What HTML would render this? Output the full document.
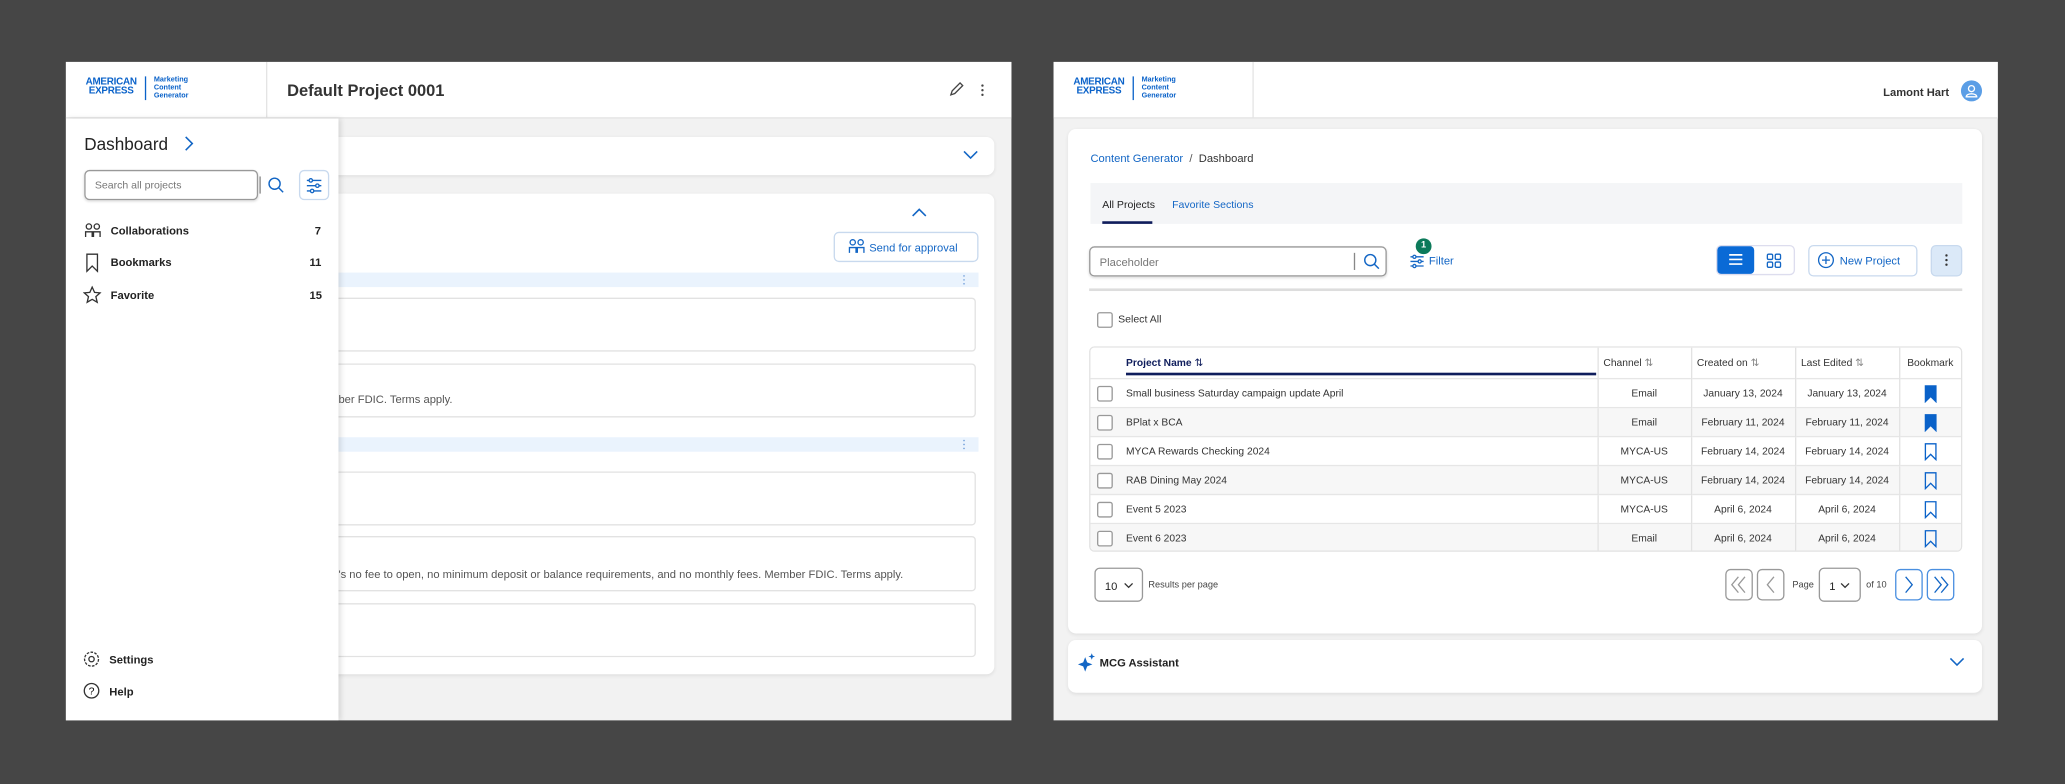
<!DOCTYPE html>
<html><head><meta charset="utf-8">
<style>
*{box-sizing:border-box;margin:0;padding:0}
html,body{width:2065px;height:783px;overflow:hidden;background:#464646;font-family:"Liberation Sans",sans-serif;color:#222}
#w{position:absolute;left:0;top:0;width:1568px;height:595px;transform:scale(1.31696);transform-origin:0 0;background:#464646}
.a{position:absolute}
.panel{position:absolute;top:47px;height:500px;background:#f2f2f2;overflow:hidden}
.hdr{position:absolute;left:0;top:0;right:0;height:43px;background:#fff;border-bottom:1px solid #e4e4e4}
.logo{position:absolute;top:11px;display:flex;align-items:flex-start}
.logo .am{color:#0a62c9;font-weight:bold;font-size:7.5px;line-height:7px;text-align:center;letter-spacing:-.2px}
.logo .bar{width:1px;height:18px;background:#0a62c9;margin:0 6px}
.logo .mc{color:#0a62c9;font-size:5.5px;line-height:6px;font-weight:bold}
.card{position:absolute;background:#fff;border-radius:6px;box-shadow:0 1px 3px rgba(0,0,0,.08)}
.box{position:absolute;border:1px solid #e2e2e2;border-radius:3px;background:#fff}
.band{position:absolute;background:#eaf3fd;height:11px}
.t{position:absolute;white-space:nowrap}
.cb{position:absolute;width:12px;height:12px;border:1px solid #999;border-radius:2px;background:#fff}
.btn{position:absolute;border:1px solid #c8d9ee;border-radius:4px;background:#fff}
.gbtn{position:absolute;border:1px solid #999;border-radius:4px;background:#fff}
table{border-collapse:collapse;table-layout:fixed}
td{padding:0;overflow:hidden;white-space:nowrap}
</style></head><body><div id="w">

<!-- LEFT PANEL -->
<div class="panel" style="left:50px;width:718px">
  <div class="hdr">
    <div class="logo" style="left:15px"><div class="am">AMERICAN<br>EXPRESS</div><div class="bar"></div><div class="mc">Marketing<br>Content<br>Generator</div></div>
    <div class="a" style="left:152px;top:0;width:1px;height:43px;background:#e4e4e4"></div>
    <div class="t" style="left:168px;top:15px;font-size:12.5px;font-weight:bold;color:#333">Default Project 0001</div>
    <svg class="a" style="left:670px;top:15px" width="12" height="12" viewBox="0 0 12 12"><path d="M2 10l1-3 6-6 2 2-6 6z" fill="none" stroke="#444" stroke-width="1"/></svg>
    <svg class="a" style="left:694px;top:16px" width="4" height="11"><circle cx="2" cy="2" r=".9" fill="#444"/><circle cx="2" cy="5.5" r=".9" fill="#444"/><circle cx="2" cy="9" r=".9" fill="#444"/></svg>
  </div>
  <div class="card" style="left:180px;top:57px;width:525px;height:29px"></div>
  <svg class="a" style="left:681px;top:67px" width="12" height="8"><path d="M1 1l5 5 5-5" fill="none" stroke="#1366c5" stroke-width="1.2"/></svg>
  <div class="card" style="left:180px;top:100px;width:525px;height:365px"></div>
  <svg class="a" style="left:642px;top:110px" width="12" height="8"><path d="M1 7l5-5 5 5" fill="none" stroke="#1366c5" stroke-width="1.2"/></svg>
  <div class="btn" style="left:583px;top:129px;width:110px;height:23px"></div>
  <svg class="a" style="left:594px;top:134px" width="13" height="12" viewBox="0 0 13 12"><circle cx="3.5" cy="3" r="2" fill="none" stroke="#1366c5"/><circle cx="9.5" cy="3" r="2" fill="none" stroke="#1366c5"/><path d="M1 11V7h5v4M7 11V7h5v4" fill="none" stroke="#1366c5"/></svg>
  <div class="t" style="left:610px;top:136px;font-size:8.5px;color:#1366c5">Send for approval</div>
  <div class="band" style="left:190px;top:160px;width:503px"></div>
  <svg class="a" style="left:680px;top:161px" width="4" height="9"><circle cx="2" cy="1.5" r=".6" fill="#6b9ad8"/><circle cx="2" cy="4.5" r=".6" fill="#6b9ad8"/><circle cx="2" cy="7.5" r=".6" fill="#6b9ad8"/></svg>
  <div class="box" style="left:190px;top:179px;width:501px;height:41px"></div>
  <div class="box" style="left:190px;top:229px;width:501px;height:41px"></div>
  <div class="t" style="left:207px;top:251px;font-size:8.5px;color:#555">ber FDIC. Terms apply.</div>
  <div class="band" style="left:190px;top:285px;width:503px"></div>
  <svg class="a" style="left:680px;top:286px" width="4" height="9"><circle cx="2" cy="1.5" r=".6" fill="#6b9ad8"/><circle cx="2" cy="4.5" r=".6" fill="#6b9ad8"/><circle cx="2" cy="7.5" r=".6" fill="#6b9ad8"/></svg>
  <div class="box" style="left:190px;top:311px;width:501px;height:41px"></div>
  <div class="box" style="left:190px;top:360px;width:501px;height:42px"></div>
  <div class="t" style="left:207px;top:384px;font-size:8.5px;color:#555">'s no fee to open, no minimum deposit or balance requirements, and no monthly fees. Member FDIC. Terms apply.</div>
  <div class="box" style="left:190px;top:411px;width:501px;height:41px"></div>

  <!-- sidebar -->
  <div class="a" style="left:0;top:43px;width:207px;height:457px;background:#fff;box-shadow:2px 0 4px rgba(0,0,0,.12)">
    <div class="t" style="left:14px;top:12px;font-size:13px;color:#222">Dashboard</div>
    <svg class="a" style="left:90px;top:13px" width="8" height="12"><path d="M1 1l5 5-5 5" fill="none" stroke="#1366c5" stroke-width="1.2"/></svg>
    <div class="a" style="left:14px;top:39px;width:132px;height:23px;border:1px solid #999;border-radius:4px;box-shadow:0 1px 2px rgba(0,0,0,.15)"></div>
    <div class="t" style="left:22px;top:46px;font-size:8px;color:#777">Search all projects</div>
    <div class="a" style="left:147px;top:44px;width:1px;height:13px;background:#888" ></div>
    <svg class="a" style="left:153px;top:44px" width="13" height="13"><circle cx="5.5" cy="5.5" r="4.2" fill="none" stroke="#1366c5" stroke-width="1.1"/><path d="M8.5 8.5l3.5 3.5" stroke="#1366c5" stroke-width="1.1"/></svg>
    <div class="btn" style="left:177px;top:39px;width:23px;height:23px"></div>
    <svg class="a" style="left:182px;top:45px" width="13" height="12"><path d="M1 2h11M1 6h11M1 10h11" stroke="#1366c5"/><circle cx="4" cy="2" r="1.3" fill="#fff" stroke="#1366c5"/><circle cx="9" cy="6" r="1.3" fill="#fff" stroke="#1366c5"/><circle cx="5" cy="10" r="1.3" fill="#fff" stroke="#1366c5"/></svg>
    <svg class="a" style="left:14px;top:79px" width="13" height="12"><circle cx="3.5" cy="3" r="2" fill="none" stroke="#333"/><circle cx="9.5" cy="3" r="2" fill="none" stroke="#333"/><path d="M1 11V7h5v4M7 11V7h5v4" fill="none" stroke="#333"/></svg>
    <div class="t" style="left:34px;top:80px;font-size:8.5px;font-weight:bold">Collaborations</div><div class="t" style="left:189px;top:80px;font-size:8.5px;font-weight:bold">7</div>
    <svg class="a" style="left:15px;top:102px" width="10" height="15"><path d="M1 1h8v13l-4-4-4 4z" fill="none" stroke="#333"/></svg>
    <div class="t" style="left:34px;top:104px;font-size:8.5px;font-weight:bold">Bookmarks</div><div class="t" style="left:185px;top:104px;font-size:8.5px;font-weight:bold">11</div>
    <svg class="a" style="left:13px;top:127px" width="14" height="14" viewBox="0 0 14 14"><path d="M7 1l1.8 4 4.2.4-3.2 2.8 1 4.3L7 10.3 3.2 12.5l1-4.3L1 5.4l4.2-.4z" fill="none" stroke="#333"/></svg>
    <div class="t" style="left:34px;top:129px;font-size:8.5px;font-weight:bold">Favorite</div><div class="t" style="left:185px;top:129px;font-size:8.5px;font-weight:bold">15</div>
    <svg class="a" style="left:13px;top:404px" width="13" height="13"><circle cx="6.5" cy="6.5" r="5.3" fill="none" stroke="#333" stroke-dasharray="2 1"/><circle cx="6.5" cy="6.5" r="2" fill="none" stroke="#333"/></svg>
    <div class="t" style="left:33px;top:406px;font-size:8.5px;font-weight:bold">Settings</div>
    <svg class="a" style="left:13px;top:428px" width="13" height="13"><circle cx="6.5" cy="6.5" r="5.5" fill="none" stroke="#333"/><text x="4.3" y="9.5" font-size="8" font-family="Liberation Sans">?</text></svg>
    <div class="t" style="left:33px;top:430px;font-size:8.5px;font-weight:bold">Help</div>
  </div>
</div>

<!-- RIGHT PANEL -->
<div class="panel" style="left:800px;width:717px">
  <div class="hdr">
    <div class="logo" style="left:15px"><div class="am">AMERICAN<br>EXPRESS</div><div class="bar"></div><div class="mc">Marketing<br>Content<br>Generator</div></div>
    <div class="a" style="left:151px;top:0;width:1px;height:43px;background:#e4e4e4"></div>
    <div class="t" style="right:37px;top:18px;font-size:8.5px;font-weight:bold;color:#333">Lamont Hart</div>
    <div class="a" style="left:689px;top:14px;width:16px;height:16px;border-radius:50%;background:#5b9ee6"></div>
    <svg class="a" style="left:692px;top:17px" width="10" height="10"><circle cx="5" cy="3.3" r="2.3" fill="none" stroke="#fff"/><path d="M1 9.5c0-3 8-3 8 0z" fill="none" stroke="#fff"/></svg>
  </div>
  <div class="card" style="left:11px;top:51px;width:694px;height:383px"></div>
  <div class="t" style="left:28px;top:68px;font-size:8.5px;color:#1366c5">Content Generator <span style="color:#555">&nbsp;/&nbsp;</span> <span style="color:#333">Dashboard</span></div>
  <div class="a" style="left:28px;top:92px;width:662px;height:31px;background:#f4f5f7"></div>
  <div class="t" style="left:37px;top:104px;font-size:8px;color:#222">All Projects</div>
  <div class="a" style="left:37px;top:121px;width:38px;height:2px;background:#0f1d5c"></div>
  <div class="t" style="left:90px;top:104px;font-size:8px;color:#1366c5">Favorite Sections</div>
  <div class="a" style="left:27px;top:140px;width:226px;height:23px;border:1px solid #999;border-radius:4px;box-shadow:0 1px 2px rgba(0,0,0,.15);background:#fff"></div>
  <div class="t" style="left:35px;top:147px;font-size:8.5px;color:#777">Placeholder</div>
  <div class="a" style="left:228px;top:145px;width:1px;height:13px;background:#888"></div>
  <svg class="a" style="left:235px;top:145px" width="13" height="13"><circle cx="5.5" cy="5.5" r="4.2" fill="none" stroke="#1366c5" stroke-width="1.1"/><path d="M8.5 8.5l3.5 3.5" stroke="#1366c5" stroke-width="1.1"/></svg>
  <svg class="a" style="left:270px;top:146px" width="12" height="11"><path d="M1 2h10M1 5.5h10M1 9h10" stroke="#1366c5"/><circle cx="4" cy="2" r="1.2" fill="#fff" stroke="#1366c5"/><circle cx="8" cy="5.5" r="1.2" fill="#fff" stroke="#1366c5"/><circle cx="4" cy="9" r="1.2" fill="#fff" stroke="#1366c5"/></svg>
  <div class="a" style="left:275px;top:134px;width:12px;height:12px;border-radius:50%;background:#0c7a5a;color:#fff;font-size:7px;font-weight:bold;text-align:center;line-height:12px">1</div>
  <div class="t" style="left:285px;top:146px;font-size:8.5px;color:#1366c5">Filter</div>
  <div class="a" style="left:503px;top:139px;width:60px;height:23px;border:1px solid #dde;border-radius:4px;background:#fff"></div>
  <div class="a" style="left:504px;top:140px;width:28px;height:21px;border-radius:3px;background:#0a6ad6"></div>
  <svg class="a" style="left:512px;top:145px" width="12" height="10"><path d="M1 1.5h10M1 5h10M1 8.5h10" stroke="#fff" stroke-width="1.3"/></svg>
  <svg class="a" style="left:541px;top:145px" width="12" height="12"><rect x="1" y="1" width="4" height="4" rx="1" fill="none" stroke="#1366c5"/><rect x="7" y="1" width="4" height="4" rx="1" fill="none" stroke="#1366c5"/><rect x="1" y="7" width="4" height="4" rx="1" fill="none" stroke="#1366c5"/><rect x="7" y="7" width="4" height="4" rx="1" fill="none" stroke="#1366c5"/></svg>
  <div class="btn" style="left:573px;top:139px;width:83px;height:24px"></div>
  <svg class="a" style="left:580px;top:144px" width="13" height="13"><circle cx="6.5" cy="6.5" r="5.6" fill="none" stroke="#1366c5"/><path d="M6.5 3.5v6M3.5 6.5h6" stroke="#1366c5"/></svg>
  <div class="t" style="left:597px;top:146px;font-size:8.5px;color:#1366c5">New Project</div>
  <div class="a" style="left:666px;top:139px;width:24px;height:24px;border:1px solid #c8d9ee;border-radius:4px;background:#dbe9f8"></div>
  <svg class="a" style="left:676px;top:145px" width="4" height="11"><circle cx="2" cy="2" r=".9" fill="#333"/><circle cx="2" cy="5.5" r=".9" fill="#333"/><circle cx="2" cy="9" r=".9" fill="#333"/></svg>
  <div class="a" style="left:27px;top:172px;width:663px;height:2px;background:#ddd"></div>
  <div class="cb" style="left:33px;top:190px"></div>
  <div class="t" style="left:49px;top:191px;font-size:8px;color:#333">Select All</div>

  <div class="a" style="left:27px;top:216px;width:663px;height:156px;border:1px solid #e2e2e2;border-radius:4px;overflow:hidden;background:#fff">
    <table style="width:661px;font-size:7.8px;color:#333">
      <colgroup><col style="width:385px"><col style="width:71px"><col style="width:79px"><col style="width:79px"><col></colgroup>
      <tr style="height:23px;background:#fff"><td style="padding-left:27px;font-weight:bold;color:#0f1d5c;position:relative">Project Name <span style="font-weight:normal">⇅</span><div class="a" style="left:27px;right:1px;bottom:2px;height:2px;background:#0f1d5c"></div></td><td style="border-left:1px solid #e2e2e2;padding-left:4px">Channel <span style="color:#888">⇅</span></td><td style="border-left:1px solid #e2e2e2;padding-left:4px">Created on <span style="color:#888">⇅</span></td><td style="border-left:1px solid #e2e2e2;padding-left:4px">Last Edited <span style="color:#888">⇅</span></td><td style="border-left:1px solid #e2e2e2;text-align:center">Bookmark</td></tr>
    </table>
    <div id="rows"></div>
  </div>

  <div class="gbtn" style="left:31px;top:384px;width:37px;height:26px"></div>
  <div class="t" style="left:39px;top:393px;font-size:8.5px">10</div>
  <svg class="a" style="left:53px;top:395px" width="8" height="6"><path d="M1 1l3 3 3-3" fill="none" stroke="#333"/></svg>
  <div class="t" style="left:72px;top:394px;font-size:7px;color:#444">Results per page</div>
  <div class="gbtn" style="left:510px;top:385px;width:21px;height:24px"></div>
  <svg class="a" style="left:513px;top:390px" width="15" height="14"><path d="M7 1l-5 6 5 6M12 1l-5 6 5 6" fill="none" stroke="#999"/></svg>
  <div class="gbtn" style="left:534px;top:385px;width:21px;height:24px"></div>
  <svg class="a" style="left:540px;top:390px" width="9" height="14"><path d="M7 1l-5 6 5 6" fill="none" stroke="#999"/></svg>
  <div class="t" style="left:561px;top:394px;font-size:7px;color:#444">Page</div>
  <div class="gbtn" style="left:581px;top:384px;width:32px;height:26px"></div>
  <div class="t" style="left:589px;top:393px;font-size:8.5px">1</div>
  <svg class="a" style="left:597px;top:395px" width="8" height="6"><path d="M1 1l3 3 3-3" fill="none" stroke="#333"/></svg>
  <div class="t" style="left:617px;top:394px;font-size:7px;color:#444">of 10</div>
  <div class="btn" style="left:639px;top:385px;width:21px;height:24px;border-color:#4a8fe0"></div>
  <svg class="a" style="left:645px;top:390px" width="9" height="14"><path d="M2 1l5 6-5 6" fill="none" stroke="#1366c5"/></svg>
  <div class="btn" style="left:663px;top:385px;width:21px;height:24px;border-color:#4a8fe0"></div>
  <svg class="a" style="left:666px;top:390px" width="15" height="14"><path d="M3 1l5 6-5 6M8 1l5 6-5 6" fill="none" stroke="#1366c5"/></svg>

  <div class="card" style="left:11px;top:439px;width:694px;height:40px"></div>
  <svg class="a" style="left:18px;top:449px" width="14" height="14" viewBox="0 0 14 14"><path d="M6 3l1.5 4 4 1.5-4 1.5L6 14l-1.5-4-4-1.5 4-1.5z" fill="#1366c5"/><path d="M11 0l.7 1.8 1.8.7-1.8.7L11 5l-.7-1.8-1.8-.7 1.8-.7z" fill="#1366c5"/></svg>
  <div class="t" style="left:35px;top:451px;font-size:8.5px;font-weight:bold">MCG Assistant</div>
  <svg class="a" style="left:680px;top:452px" width="12" height="8"><path d="M1 1l5 5 5-5" fill="none" stroke="#1366c5" stroke-width="1.2"/></svg>
</div>

<script>
var d=[["Small business Saturday campaign update April","Email","January 13, 2024","January 13, 2024",1],["BPlat x BCA","Email","February 11, 2024","February 11, 2024",1],["MYCA Rewards Checking 2024","MYCA-US","February 14, 2024","February 14, 2024",0],["RAB Dining May 2024","MYCA-US","February 14, 2024","February 14, 2024",0],["Event 5 2023","MYCA-US","April 6, 2024","April 6, 2024",0],["Event 6 2023","Email","April 6, 2024","April 6, 2024",0]];
var h='<table style="width:661px;font-size:7.8px;color:#333"><colgroup><col style="width:385px"><col style="width:71px"><col style="width:79px"><col style="width:79px"><col></colgroup>';
d.forEach(function(r,i){
 var bm=r[4]?'<path d="M1 1h8v12l-4-4-4 4z" fill="#0a62c9" stroke="#0a62c9"/>':'<path d="M1 1h8v12l-4-4-4 4z" fill="none" stroke="#0a62c9"/>';
 h+='<tr style="height:22px;border-top:1px solid #e6e6e6;background:'+(i%2?'#f7f7f7':'#fff')+'"><td style="padding-left:27px;position:relative"><div class="cb" style="left:5px;top:5px"></div>'+r[0]+'</td><td style="border-left:1px solid #e2e2e2;text-align:center">'+r[1]+'</td><td style="border-left:1px solid #e2e2e2;text-align:center">'+r[2]+'</td><td style="border-left:1px solid #e2e2e2;text-align:center">'+r[3]+'</td><td style="border-left:1px solid #e2e2e2;text-align:center"><svg width="10" height="14" style="vertical-align:middle;display:inline-block">'+bm+'</svg></td></tr>';
});
document.getElementById('rows').innerHTML=h+'</table>';
</script>
</div></body></html>
